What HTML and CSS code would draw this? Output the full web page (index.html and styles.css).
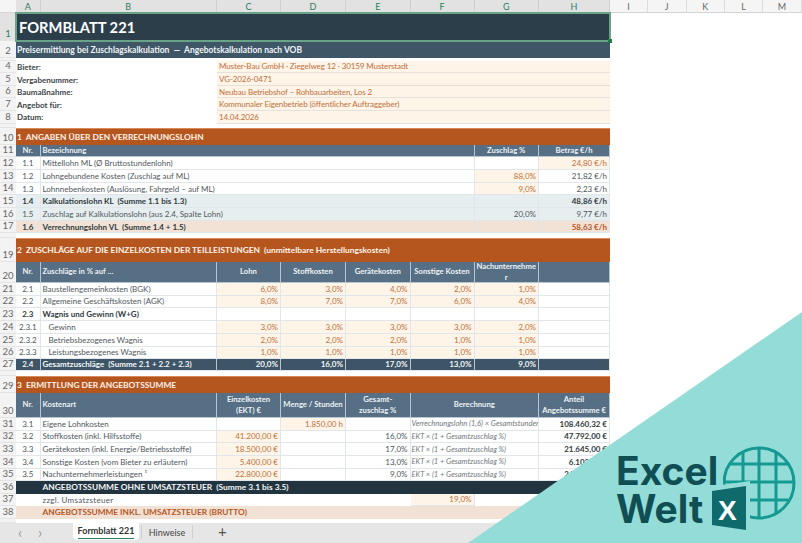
FILE: index.html
```html
<!DOCTYPE html>
<html lang="de">
<head>
    <meta charset="UTF-8">
    <title>Formblatt 221</title>
    <link rel="stylesheet" href="styles.css">
</head>
<body>
<div class="window">
    <div class="col_heads">
        <div class="corner"></div>
        <div class="ch sel">A</div><div class="ch sel">B</div><div class="ch sel">C</div><div class="ch sel">D</div>
        <div class="ch sel">E</div><div class="ch sel">F</div><div class="ch sel">G</div><div class="ch sel">H</div>
        <div class="ch">I</div><div class="ch">J</div><div class="ch">K</div><div class="ch">L</div><div class="ch">M</div>
    </div>

    <div class="sheet">
        <!-- kopf -->
        <div class="rh rh_sel">1</div>
        <div class="c span8 title">FORMBLATT 221</div>
        <div class="rh">2</div>
        <div class="c span8 subtitle">Preisermittlung bei Zuschlagskalkulation &nbsp;—&nbsp; Angebotskalkulation nach VOB</div>
        <div class="rh"></div>
        <div class="c span8"></div>

        <div class="rh">4</div>
        <div class="c span2 meta_label">Bieter:</div>
        <div class="c span6 meta_value">Muster-Bau GmbH · Ziegelweg 12 · 30159 Musterstadt</div>
        <div class="rh">5</div>
        <div class="c span2 meta_label">Vergabenummer:</div>
        <div class="c span6 meta_value">VG-2026-0471</div>
        <div class="rh">6</div>
        <div class="c span2 meta_label">Baumaßnahme:</div>
        <div class="c span6 meta_value">Neubau Betriebshof – Rohbauarbeiten, Los 2</div>
        <div class="rh">7</div>
        <div class="c span2 meta_label">Angebot für:</div>
        <div class="c span6 meta_value">Kommunaler Eigenbetrieb (öffentlicher Auftraggeber)</div>
        <div class="rh">8</div>
        <div class="c span2 meta_label">Datum:</div>
        <div class="c span6 meta_value">14.04.2026</div>
        <div class="rh"></div>
        <div class="c span8"></div>

        <!-- abschnitt 1 -->
        <div class="rh">10</div>
        <div class="c span8 section">1&nbsp; ANGABEN ÜBER DEN VERRECHNUNGSLOHN</div>
        <div class="rh">11</div>
        <div class="c head center">Nr.</div>
        <div class="c head span5">Bezeichnung</div>
        <div class="c head center">Zuschlag %</div>
        <div class="c head center">Betrag €/h</div>

        <div class="rh">12</div>
        <div class="c nr">1.1</div>
        <div class="c txt span5">Mittellohn ML (Ø Bruttostundenlohn)</div>
        <div class="c"></div>
        <div class="c num inp">24,80 €/h</div>
        <div class="rh">13</div>
        <div class="c nr">1.2</div>
        <div class="c txt span5">Lohngebundene Kosten (Zuschlag auf ML)</div>
        <div class="c num inp">88,0%</div>
        <div class="c num">21,82 €/h</div>
        <div class="rh">14</div>
        <div class="c nr">1.3</div>
        <div class="c txt span5">Lohnnebenkosten (Auslösung, Fahrgeld – auf ML)</div>
        <div class="c num inp">9,0%</div>
        <div class="c num">2,23 €/h</div>
        <div class="rh">15</div>
        <div class="c nr sub b">1.4</div>
        <div class="c txt sub b span5">Kalkulationslohn KL &nbsp;(Summe 1.1 bis 1.3)</div>
        <div class="c sub"></div>
        <div class="c num sub b">48,86 €/h</div>
        <div class="rh">16</div>
        <div class="c nr sub">1.5</div>
        <div class="c txt sub span5">Zuschlag auf Kalkulationslohn (aus 2.4, Spalte Lohn)</div>
        <div class="c num sub">20,0%</div>
        <div class="c num sub">9,77 €/h</div>
        <div class="rh">17</div>
        <div class="c nr peach b">1.6</div>
        <div class="c txt peach b span5">Verrechnungslohn VL &nbsp;(Summe 1.4 + 1.5)</div>
        <div class="c peach"></div>
        <div class="c num peach b rust">58,63 €/h</div>
        <div class="rh"></div>
        <div class="c span8"></div>

        <!-- abschnitt 2 -->
        <div class="rh">19</div>
        <div class="c span8 section">2&nbsp; ZUSCHLÄGE AUF DIE EINZELKOSTEN DER TEILLEISTUNGEN &nbsp;(unmittelbare Herstellungskosten)</div>
        <div class="rh">20</div>
        <div class="c head center">Nr.</div>
        <div class="c head">Zuschläge in % auf …</div>
        <div class="c head center">Lohn</div>
        <div class="c head center">Stoffkosten</div>
        <div class="c head center">Gerätekosten</div>
        <div class="c head center">Sonstige Kosten</div>
        <div class="c head center">Nachunternehme<br>r</div>
        <div class="c head"></div>

        <div class="rh">21</div>
        <div class="c nr">2.1</div>
        <div class="c txt">Baustellengemeinkosten (BGK)</div>
        <div class="c num inp">6,0%</div><div class="c num inp">3,0%</div><div class="c num inp">4,0%</div><div class="c num inp">2,0%</div><div class="c num inp">1,0%</div>
        <div class="c"></div>
        <div class="rh">22</div>
        <div class="c nr">2.2</div>
        <div class="c txt">Allgemeine Geschäftskosten (AGK)</div>
        <div class="c num inp">8,0%</div><div class="c num inp">7,0%</div><div class="c num inp">7,0%</div><div class="c num inp">6,0%</div><div class="c num inp">4,0%</div>
        <div class="c"></div>
        <div class="rh">23</div>
        <div class="c nr b">2.3</div>
        <div class="c txt b">Wagnis und Gewinn (W+G)</div>
        <div class="c"></div><div class="c"></div><div class="c"></div><div class="c"></div><div class="c"></div><div class="c"></div>
        <div class="rh">24</div>
        <div class="c nr">2.3.1</div>
        <div class="c txt indent">Gewinn</div>
        <div class="c num inp">3,0%</div><div class="c num inp">3,0%</div><div class="c num inp">3,0%</div><div class="c num inp">3,0%</div><div class="c num inp">2,0%</div>
        <div class="c"></div>
        <div class="rh">25</div>
        <div class="c nr">2.3.2</div>
        <div class="c txt indent">Betriebsbezogenes Wagnis</div>
        <div class="c num inp">2,0%</div><div class="c num inp">2,0%</div><div class="c num inp">2,0%</div><div class="c num inp">1,0%</div><div class="c num inp">1,0%</div>
        <div class="c"></div>
        <div class="rh">26</div>
        <div class="c nr">2.3.3</div>
        <div class="c txt indent">Leistungsbezogenes Wagnis</div>
        <div class="c num inp">1,0%</div><div class="c num inp">1,0%</div><div class="c num inp">1,0%</div><div class="c num inp">1,0%</div><div class="c num inp">1,0%</div>
        <div class="c"></div>
        <div class="rh">27</div>
        <div class="c nr total">2.4</div>
        <div class="c txt total">Gesamtzuschläge &nbsp;(Summe 2.1 + 2.2 + 2.3)</div>
        <div class="c num total">20,0%</div><div class="c num total">16,0%</div><div class="c num total">17,0%</div><div class="c num total">13,0%</div><div class="c num total">9,0%</div>
        <div class="c total"></div>
        <div class="rh"></div>
        <div class="c span8"></div>

        <!-- abschnitt 3 -->
        <div class="rh">29</div>
        <div class="c span8 section">3&nbsp; ERMITTLUNG DER ANGEBOTSSUMME</div>
        <div class="rh">30</div>
        <div class="c head center">Nr.</div>
        <div class="c head">Kostenart</div>
        <div class="c head center">Einzelkosten<br>(EKT) €</div>
        <div class="c head center">Menge / Stunden</div>
        <div class="c head center">Gesamt-<br>zuschlag %</div>
        <div class="c head center span2">Berechnung</div>
        <div class="c head center">Anteil<br>Angebotssumme €</div>

        <div class="rh">31</div>
        <div class="c nr">3.1</div>
        <div class="c txt">Eigene Lohnkosten</div>
        <div class="c"></div>
        <div class="c num inp">1.850,00 h</div>
        <div class="c"></div>
        <div class="c note span2">Verrechnungslohn (1,6) × Gesamtstunden</div>
        <div class="c num b">108.460,32 €</div>
        <div class="rh">32</div>
        <div class="c nr">3.2</div>
        <div class="c txt">Stoffkosten (inkl. Hilfsstoffe)</div>
        <div class="c num inp">41.200,00 €</div>
        <div class="c"></div>
        <div class="c num">16,0%</div>
        <div class="c note span2">EKT × (1 + Gesamtzuschlag %)</div>
        <div class="c num b">47.792,00 €</div>
        <div class="rh">33</div>
        <div class="c nr">3.3</div>
        <div class="c txt">Gerätekosten (inkl. Energie/Betriebsstoffe)</div>
        <div class="c num inp">18.500,00 €</div>
        <div class="c"></div>
        <div class="c num">17,0%</div>
        <div class="c note span2">EKT × (1 + Gesamtzuschlag %)</div>
        <div class="c num b">21.645,00 €</div>
        <div class="rh">34</div>
        <div class="c nr">3.4</div>
        <div class="c txt">Sonstige Kosten (vom Bieter zu erläutern)</div>
        <div class="c num inp">5.400,00 €</div>
        <div class="c"></div>
        <div class="c num">13,0%</div>
        <div class="c note span2">EKT × (1 + Gesamtzuschlag %)</div>
        <div class="c num b">6.102,00 €</div>
        <div class="rh">35</div>
        <div class="c nr">3.5</div>
        <div class="c txt">Nachunternehmerleistungen ¹</div>
        <div class="c num inp">22.800,00 €</div>
        <div class="c"></div>
        <div class="c num">9,0%</div>
        <div class="c note span2">EKT × (1 + Gesamtzuschlag %)</div>
        <div class="c num b">24.852,00 €</div>
        <div class="rh">36</div>
        <div class="c dark"></div>
        <div class="c dark span6">ANGEBOTSSUMME OHNE UMSATZSTEUER &nbsp;(Summe 3.1 bis 3.5)</div>
        <div class="c dark"></div>
        <div class="rh">37</div>
        <div class="c plain"></div>
        <div class="c small span4">zzgl. Umsatzsteuer</div>
        <div class="c num inp">19,0%</div>
        <div class="c plain"></div>
        <div class="c plain"></div>
        <div class="rh">38</div>
        <div class="c peach_line"></div>
        <div class="c peach_line span7">ANGEBOTSSUMME INKL. UMSATZSTEUER (BRUTTO)</div>
        <div class="rh"></div>
        <div class="c span8"></div>
    </div>

    <div class="tabs">
        <span class="tab_nav first">‹</span>
        <span class="tab_nav">›</span>
        <div class="tab tab_on"><span>Formblatt 221</span></div>
        <div class="tab tab_off">Hinweise</div>
        <div class="tab_add">+</div>
    </div>

    <svg class="badge" width="802" height="543" viewBox="0 0 802 543">
        <polygon points="802,312 802,543 468,543" fill="#94dcd8"/>
        <g fill="none" stroke="#149a92" stroke-width="3">
            <circle cx="759" cy="483" r="35"/>
            <path d="M743 451V515M759 448V518M776 452V514M729 464H789M725 482H794M730 500H788"/>
        </g>
        <polygon points="708,487 750,481 750,535 708,529" fill="#94dcd8"/>
        <polygon points="712,491 746,486 746,530 712,525" fill="#0f6a6c"/>
        <text x="718" y="520" class="badge_x">X</text>
        <rect x="714" y="444" width="9" height="44" fill="#94dcd8"/>
        <text x="616" y="485" class="badge_word">Excel</text>
        <text x="616" y="523" class="badge_word">Welt</text>
    </svg>
</div>
</body>
</html>
```

FILE: styles.css
```css
* {
    box-sizing: border-box;
}

html, body {
    margin: 0;
    background-color: white;
}

.window {
    position: relative;
    width: 802px;
    height: 543px;
    overflow: hidden;
    font-family: Lato, "Noto Sans", sans-serif;
    font-size: 8px;
    color: #4f575c;
}

/* spaltenkoepfe */
.col_heads {
    display: grid;
    grid-template-columns: 16px 24.5px 176.5px 64px 65px 64.5px 64px 64.5px 71px 38px 38.5px 38.5px 38px 39px;
    height: 13px;
    background-color: #f5f5f5;
    border-bottom: 1px solid #d4d4d4;
}

.ch {
    display: flex;
    align-items: center;
    justify-content: center;
    font-size: 9px;
    color: #666;
    border-right: 1px solid #dcdcdc;
}

.ch.sel {
    background-color: #e2e2e2;
    color: #2f7d5b;
    border-right-color: #cfcfcf;
}

/* tabelle */
.sheet {
    display: grid;
    width: 610px;
    grid-template-columns: 16px 24.5px 176.5px 64px 65px 64.5px 64px 64.5px 71px;
    grid-template-rows:
        28px 17px 2.5px
        12.8px 12.5px 12.5px 12.5px 13px 4.5px
        16.5px 12.5px 13px 12.7px 12.5px 12.6px 13px 12.2px 4.3px
        24px 21px 13px 12.6px 13px 12.4px 13px 12px 12.5px 4.5px
        17px 25px 13px 12.5px 13px 12.5px 12.5px 12.5px 12px 13px 4px;
    height: 510px;
}

.c {
    display: flex;
    align-items: center;
    min-width: 0;
    overflow: hidden;
    white-space: nowrap;
}

.span2 { grid-column: span 2; }
.span4 { grid-column: span 4; }
.span5 { grid-column: span 5; }
.span6 { grid-column: span 6; }
.span7 { grid-column: span 7; }
.span8 { grid-column: span 8; }

.rh {
    display: flex;
    align-items: flex-end;
    justify-content: center;
    overflow: hidden;
    background-color: #f3f3f3;
    font-size: 9.5px;
    line-height: 12px;
    color: #666;
    border-bottom: 1px solid #e4e4e4;
}

.rh_sel {
    background-color: #e2e2e2;
    color: #2f7d5b;
}

.title {
    position: relative;
    padding-left: 3px;
    background-color: #2c3e4a;
    font-size: 14.7px;
    font-weight: 700;
    color: white;
    outline: 2px solid #6aa488;
    outline-offset: -1px;
    overflow: visible;
}

.title::after {
    content: "";
    position: absolute;
    right: -2px;
    bottom: -2px;
    width: 4px;
    height: 4px;
    background-color: #1f7a4d;
}

.subtitle {
    padding-left: 1px;
    background-color: #3e5666;
    font-size: 8.5px;
    font-weight: 700;
    color: #f0f4f6;
}

.meta_label {
    padding-left: 1px;
    font-weight: 700;
    color: #3c4448;
}

.meta_value {
    padding-left: 2px;
    background-color: #fef4e8;
    color: #c0703a;
    letter-spacing: -0.1px;
    border-bottom: 1px solid #e6e1da;
}

.section {
    padding-left: 1px;
    background-color: #b5561e;
    border-top: 1px solid #d98a58;
    font-size: 8.4px;
    font-weight: 700;
    color: #fdf3ea;
}

.head {
    padding-left: 2px;
    background-color: #566f84;
    font-size: 7.7px;
    font-weight: 700;
    line-height: 11px;
    color: #edf2f5;
    border-right: 1px solid #b8c6cf;
    border-bottom: 1px solid #b8c6cf;
}

.center {
    justify-content: center;
    padding-left: 0;
    text-align: center;
}

.nr, .txt, .num, .note, .sub, .peach, .inp {
    border-right: 1px solid #e0e6e9;
    border-bottom: 1px solid #e0e6e9;
}

.sheet > .c:empty:not(.head):not(.span8):not(.plain):not(.dark):not(.peach_line) {
    border-right: 1px solid #e0e6e9;
    border-bottom: 1px solid #e0e6e9;
}

.nr {
    justify-content: center;
}

.txt {
    padding-left: 2px;
}

.indent {
    padding-left: 8px;
}

.num {
    justify-content: flex-end;
    padding-right: 2px;
}

.note {
    padding-left: 1px;
    font-size: 7.5px;
    font-style: italic;
    color: #70787d;
}

.inp {
    background-color: #fef4e8;
    color: #c0703a;
}

.sub {
    background-color: #e7eef0;
}

.peach {
    background-color: #f2e2d5;
}

.b {
    font-weight: 700;
    color: #303a40;
}

.rust {
    color: #b5561e;
}

.total {
    background-color: #3d5566;
    font-weight: 700;
    color: #f3f6f8;
    border-right-color: #b8c6cf;
}

.dark {
    padding-left: 2px;
    background-color: #223440;
    font-size: 8.4px;
    font-weight: 700;
    color: #f3f6f8;
}

.small {
    padding-left: 2px;
    letter-spacing: 0.3px;
}

.peach_line {
    padding-left: 2px;
    background-color: #f2e2d5;
    font-size: 8.3px;
    font-weight: 700;
    color: #b5561e;
}

/* blattregister */
.tabs {
    display: flex;
    align-items: flex-start;
    height: 20px;
    background-color: #e6e6e6;
    font-size: 9px;
    color: #444;
}

.tab_nav {
    width: 20px;
    margin-top: 1px;
    text-align: center;
    font-size: 15px;
    line-height: 16px;
    color: #9a9a9a;
}

.first {
    margin-left: 10px;
}

.tab {
    display: flex;
    justify-content: center;
    flex: none;
    padding-top: 1px;
    height: 17px;
    line-height: 13px;
    white-space: nowrap;
}

.tab_on {
    width: 66px;
    margin-left: 23px;
    background-color: white;
    border-radius: 0 0 4px 4px;
    font-weight: 700;
    color: #333;
}

.tab_on span {
    height: 15px;
    border-bottom: 1.5px solid #2f7d5b;
}

.tab_off {
    width: 52px;
    margin-left: 2px;
    margin-top: 2px;
    height: 14px;
    border-left: 1px solid #cfcfcf;
    border-right: 1px solid #cfcfcf;
}

.tab_add {
    margin-left: 25px;
    font-size: 15px;
    line-height: 17px;
    color: #555;
}

/* logo ecke */
.badge {
    position: absolute;
    left: 0;
    top: 0;
}

.badge_word {
    font-family: Inter, "Liberation Sans", sans-serif;
    font-size: 39px;
    font-weight: 700;
    fill: #0f4f54;
}

.badge_x {
    font-family: "Liberation Sans", sans-serif;
    font-size: 28px;
    font-weight: 700;
    fill: white;
}
```
